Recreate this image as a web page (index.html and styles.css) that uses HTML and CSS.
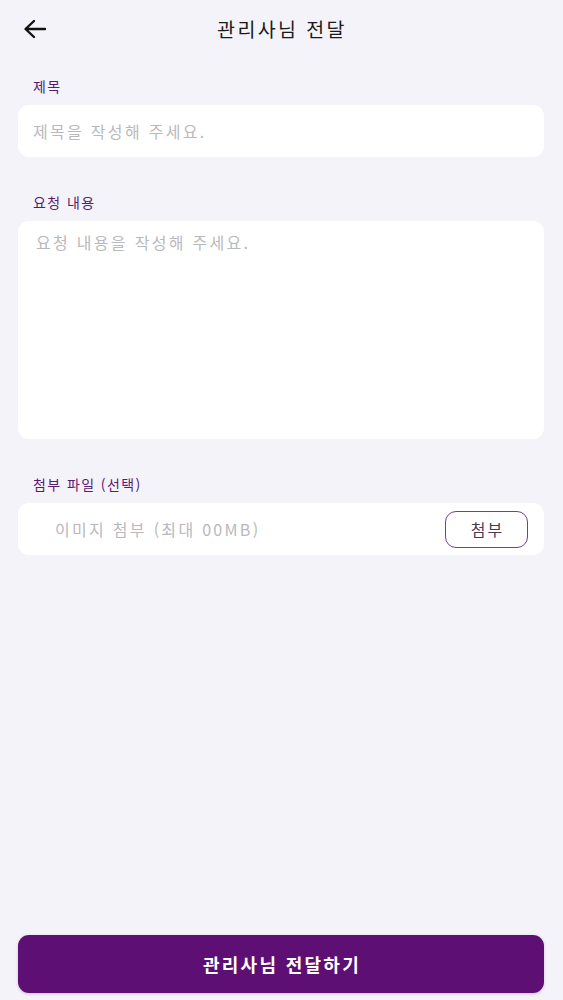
FILE: index.html
```html
<!DOCTYPE html>
<html lang="ko">
<head>
<meta charset="utf-8">
<meta name="viewport" content="width=device-width, initial-scale=1">
<title>관리사님 전달</title>
<link rel="stylesheet" href="styles.css">
</head>
<body>
<div class="screen">
  <header class="topbar">
    <button class="back" aria-label="뒤로">
      <svg width="24" height="20" viewBox="0 0 24 20"><path d="M22 10H3M11 2L2.5 10L11 18" fill="none" stroke="#111" stroke-width="2.4" stroke-linecap="round" stroke-linejoin="round"/></svg>
    </button>
    <h1 class="title">관리사님 전달</h1>
  </header>

  <main class="form">
    <section class="field">
      <label class="label">제목</label>
      <div class="box input">제목을 작성해 주세요.</div>
    </section>

    <section class="field">
      <label class="label">요청 내용</label>
      <div class="box textarea">요청 내용을 작성해 주세요.</div>
    </section>

    <section class="field">
      <label class="label">첨부 파일 (선택)</label>
      <div class="box attach">
        <span class="attach-text">이미지 첨부 (최대 00MB)</span>
        <button class="attach-btn">첨부</button>
      </div>
    </section>
  </main>

  <footer class="bottom">
    <button class="submit">관리사님 전달하기</button>
  </footer>
</div>
</body>
</html>
```
FILE: styles.css
```css
* { box-sizing: border-box; }
html, body { margin: 0; padding: 0; }
body {
  background: #f4f3f9;
  font-family: "Noto Sans CJK KR", "Noto Sans", sans-serif;
  color: #111;
}
.screen {
  height: 1000px;
  display: flex;
  flex-direction: column;
  padding: 0 19px 7px 18px;
}
.topbar {
  position: relative;
  height: 56px;
  display: flex;
  align-items: center;
  justify-content: center;
}
.back {
  position: absolute;
  left: 5px;
  top: 18px;
  border: 0;
  background: none;
  padding: 0;
  width: 26px;
  height: 22px;
  display: flex;
  align-items: center;
}
.title {
  margin: 0;
  font-size: 19.5px;
  font-weight: 400;
  color: #1a1a1a;
  letter-spacing: 2.4px;
  padding-left: 2px;
}
.form {
  flex: 1;
  display: flex;
  flex-direction: column;
  gap: 35px;
  padding-top: 20px;
}
.field {
  display: flex;
  flex-direction: column;
  gap: 9px;
}
.label {
  padding-left: 15px;
  font-size: 14px;
  line-height: 20px;
  color: #5a1a70;
  font-weight: 400;
  letter-spacing: 1.4px;
}
.box {
  background: #fff;
  border-radius: 11px;
  color: #b9b9bd;
  font-size: 16px;
  letter-spacing: 2.3px;
}
.input {
  height: 52px;
  display: flex;
  align-items: center;
  padding-left: 15px;
}
.textarea {
  height: 218px;
  padding: 10px 18px;
  line-height: 22px;
}
.attach {
  height: 52px;
  display: flex;
  align-items: center;
  justify-content: space-between;
  padding: 0 16px 0 37px;
}
.attach-btn {
  width: 83px;
  height: 37px;
  border: 1.8px solid #74428c;
  border-radius: 11px;
  background: #fff;
  font-family: inherit;
  font-size: 16px;
  letter-spacing: 2px;
  padding: 0 0 0 2px;
  color: #4a3a55;
  font-weight: 400;
}
.bottom {
  display: flex;
}
.submit {
  flex: 1;
  height: 58px;
  border: 0;
  border-radius: 11px;
  background: #5d0f73;
  color: #fff;
  font-family: inherit;
  font-size: 18px;
  font-weight: 700;
  letter-spacing: 2.3px;
  padding: 0 0 0 2px;
  box-shadow: 0 1px 3px rgba(93, 15, 115, 0.25);
}
```
